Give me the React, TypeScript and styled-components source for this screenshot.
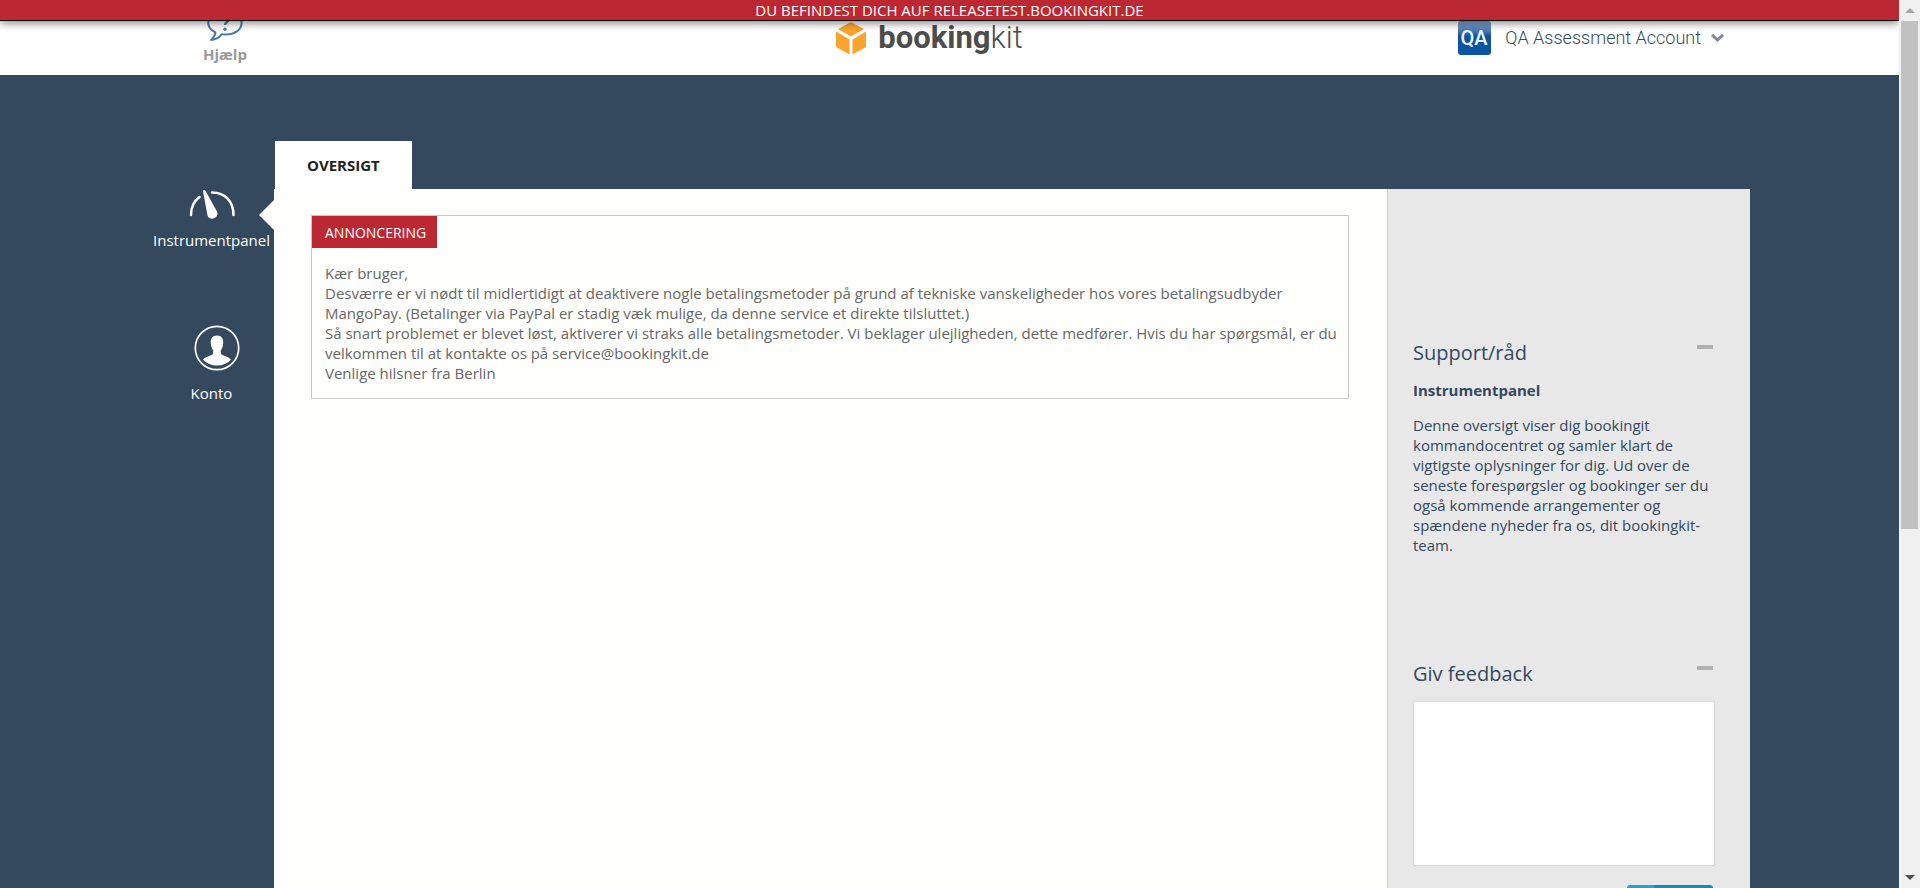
import React from 'react';
import styled, { createGlobalStyle } from 'styled-components';

const navy = '#34495e';
const red = '#bb2831';

const GlobalStyle = createGlobalStyle`
  *, *::before, *::after { box-sizing: border-box; }
  body {
    margin: 0;
    font-family: "Open Sans", "Noto Sans", sans-serif;
    font-size: 15px;
    line-height: 20px;
    color: ${navy};
    background: ${navy};
  }
  a { color: inherit; text-decoration: none; }
  h1, h2, h3, p { margin: 0; }
`;

const Shell = styled.div`
  display: grid;
  grid-template-columns: minmax(0, 1fr) 21px;
  height: 100vh;
`;

const Page = styled.div`
  position: relative;
  display: flex;
  flex-direction: column;
  overflow-y: auto;
  scrollbar-width: none;
`;

const Notice = styled.div`
  position: absolute;
  inset: 0 0 auto 0;
  z-index: 2;
  height: 21px;
  border-bottom: 1px solid #000;
  background: ${red};
  color: #fff;
  text-align: center;
  box-shadow: 0 2px 8px rgba(0, 0, 0, 0.5);
`;

const Header = styled.header`
  flex: none;
  height: 75px;
  background: #fff;
`;

const Container = styled.div`
  width: 100%;
  max-width: 1601px;
  margin: 0 auto;
`;

const HeaderRow = styled(Container)`
  display: grid;
  grid-template-columns: 1fr auto 1fr;
  height: 75px;
  padding-right: 26px;
`;

const HelpLink = styled.a`
  display: flex;
  flex-direction: column;
  align-items: center;
  justify-self: start;
  gap: 3px;
  width: 152px;
  padding-top: 7px;
  color: #999;
  font-weight: 700;
`;

const Brand = styled.a`
  display: flex;
  align-items: center;
  gap: 12px;
  height: 75px;
  margin-right: 14px;
  color: #4d4d4d;
  font: 700 31px/36px Roboto, sans-serif;
`;

const BrandThin = styled.span`
  font-weight: 300;
`;

const AccountButton = styled.button`
  display: flex;
  align-items: center;
  justify-self: end;
  height: 75px;
  padding: 0;
  border: 0;
  background: none;
  color: ${navy};
  font: 300 18px/24px Roboto, sans-serif;
`;

const AccountName = styled.span`
  margin: 0 10px 0 14px;
`;

const Workspace = styled(Container)`
  flex: 1 0 auto;
  display: grid;
  grid-template-columns: 125px minmax(0, 1fr);
  padding-top: 66px;
`;

const SideNav = styled.nav`
  display: flex;
  flex-direction: column;
  gap: 75px;
  padding-top: 48px;
`;

const NavLink = styled.a`
  position: relative;
  display: flex;
  flex-direction: column;
  align-items: center;
  gap: 12px;
  color: #fff;

  &[aria-current='page'] {
    gap: 7px;
  }

  &[aria-current='page']::after {
    content: '';
    position: absolute;
    top: 11px;
    right: 0;
    border: 15px solid transparent;
    border-right-color: #fefefc;
    border-left-width: 0;
  }
`;

const Main = styled.main`
  display: flex;
  flex-direction: column;
`;

const Tab = styled.a`
  align-self: flex-start;
  margin-left: 1px;
  padding: 14px 32px;
  background: #fff;
  color: #222;
  font-weight: 700;
`;

const Panel = styled.div`
  flex: 1;
  display: grid;
  grid-template-columns: minmax(0, 1fr) 363px;
  background: #fefefc;
`;

const Content = styled.section`
  padding: 26px 38px 26px 37px;
`;

const Announcement = styled.article`
  padding-bottom: 15px;
  border: 1px solid #c8c8c8;
  color: #666;
`;

const AnnouncementTitle = styled.h2`
  width: max-content;
  padding: 7px 11px 5px 13px;
  background: ${red};
  color: #fff;
  font-size: 14px;
  font-weight: 400;
  line-height: 20px;
`;

const AnnouncementText = styled.div`
  padding: 15px 10px 0 13px;
`;

const Sidebar = styled.aside`
  display: flex;
  flex-direction: column;
  gap: 105px;
  padding: 150px 35px 40px 25px;
  border-left: 1px solid #d2d2d2;
  background: #e8e8e8;
`;

const Widget = styled.section`
  display: flex;
  flex-direction: column;
`;

const WidgetHead = styled.div`
  display: flex;
  justify-content: space-between;
  align-items: flex-start;
  padding-right: 2px;
`;

const WidgetTitle = styled.h2`
  font-size: 20px;
  font-weight: 400;
  line-height: 28px;
`;

const Collapse = styled.button`
  width: 16px;
  height: 16px;
  padding: 0;
  border: 0;
  background: linear-gradient(#b0b0b0, #b0b0b0) 0 6px / 16px 4px no-repeat;
`;

const Topic = styled.h3`
  margin: 13px 0 15px;
  font-size: 15px;
  font-weight: 700;
  line-height: 20px;
`;

const Feedback = styled.textarea`
  height: 165px;
  margin: 13px 0 19px;
  border: 1px solid #d5d5d5;
  border-radius: 2px;
  background: #fff;
  font: inherit;
  resize: none;
`;

const SendButton = styled.button`
  align-self: flex-end;
  width: 86px;
  height: 40px;
  margin-right: 2px;
  padding: 0 0 0 26px;
  border: 0;
  border-radius: 3px;
  background: linear-gradient(90deg, #2ba0ca 27px, #178ab0 27px);
  color: #fff;
  font: inherit;
`;

const ScrollTrack = styled.div`
  display: flex;
  flex-direction: column;
  align-items: center;
  background: #f0f0f0;
`;

const ScrollArrow = styled.span<{ $down?: boolean }>`
  display: flex;
  justify-content: center;
  align-items: center;
  flex: none;
  height: 21px;

  &::after {
    content: '';
    border: 5px solid transparent;
    ${(p) =>
      p.$down
        ? 'border-top-color: #505050; border-bottom-width: 0;'
        : 'border-bottom-color: #a3a3a3; border-top-width: 0;'}
  }
`;

const ScrollRail = styled.div`
  flex: 1;
  width: 17px;
`;

const ScrollThumb = styled.div`
  height: 60%;
  background: #c1c1c1;
`;

const HelpIcon = () => (
  <svg width="36" height="34" viewBox="0 0 36 34" fill="none" stroke="#4f7ba8" strokeWidth="2" aria-hidden="true">
    <path d="M8.5 25.5C3.5 23 1.2 20 1.2 16C1.2 9 8 4 18 4s16.600 5 16.600 12-7 11.500-16 11.500c-1.500 0-2.500-.1-3.800-.4C12.500 30.500 8.500 32.500 4 33c2.500-2 4-4.500 4.500-7.500Z" strokeLinejoin="round" />
    <path d="M14 12c0-5 8-5 8 0 0 3-4 3-4 6" strokeWidth="2.500" />
    <circle cx="18" cy="22.200" r="1.700" fill="#4f7ba8" stroke="none" />
  </svg>
);

const CubeIcon = () => (
  <svg width="30" height="34" viewBox="0 0 30 34" fill="#f9a42c" aria-hidden="true">
    <path d="M15 1 28 8 15 15.500 2 8Z" />
    <path d="M0 10.500 13.500 18.500V33.500L0 26Z" />
    <path d="M30 10.500 16.500 18.500V33.500L30 26Z" />
  </svg>
);

const AccountLogo = () => (
  <svg width="33" height="34" viewBox="0 0 33 34" aria-hidden="true">
    <defs>
      <linearGradient id="badge" x1="0" y1="0" x2="0" y2="1">
        <stop offset="0" stopColor="#8aa9d0" />
        <stop offset="0.300" stopColor="#4577b3" />
        <stop offset="0.450" stopColor="#0f529d" />
        <stop offset="1" stopColor="#0b55a2" />
      </linearGradient>
    </defs>
    <rect width="33" height="34" rx="3" fill="url(#badge)" />
    <text x="16" y="24" textAnchor="middle" fill="#eaf6ff" fontFamily="Roboto, sans-serif" fontSize="20" fontWeight="500">QA</text>
  </svg>
);

const Chevron = () => (
  <svg width="13" height="10" viewBox="0 0 13 10" fill="none" stroke="#80899a" strokeWidth="3" aria-hidden="true">
    <path d="M1 1.800 6.500 7 12 1.800" />
  </svg>
);

const GaugeIcon = () => (
  <svg width="46" height="34" viewBox="0 0 46 34" fill="none" stroke="#fff" strokeWidth="2.500" strokeLinecap="round" aria-hidden="true">
    <path d="M2 26C2 18.500 5 12 10.500 8M23 3.500C36 3.500 44.500 12.500 44.500 26" />
    <path d="M14 2c.3-1.400 2-1.400 2.600 0L28 22.500c2.600 7-7.500 10-9.500 4Z" fill="#fff" stroke="none" />
  </svg>
);

const PersonIcon = () => (
  <svg width="56" height="46" viewBox="-10 0 56 46" aria-hidden="true">
    <circle cx="23" cy="23" r="21.700" fill="none" stroke="#fff" strokeWidth="1.700" />
    <path d="M23 10.500c4.600 0 6.500 3 6.200 7.500-.2 3.500-1 5.500-2.400 7.300v3.200c1 2.500 7.500 2.500 10.200 6.200C33.500 38.500 28.500 40.500 23 40.500S12.500 38.500 9 34.700c2.700-3.700 9.200-3.700 10.200-6.200v-3.200c-1.400-1.800-2.200-3.800-2.400-7.300-.3-4.500 1.600-7.500 6.200-7.500Z" fill="#fff" />
  </svg>
);

export default function App() {
  return (
    <>
      <GlobalStyle />
      <Shell>
        <Page>
          <Notice>DU BEFINDEST DICH AUF RELEASETEST.BOOKINGKIT.DE</Notice>
          <Header>
            <HeaderRow>
              <HelpLink href="#help">
                <HelpIcon />
                Hjælp
              </HelpLink>
              <Brand href="#home">
                <CubeIcon />
                <span>booking<BrandThin>kit</BrandThin></span>
              </Brand>
              <AccountButton type="button">
                <AccountLogo />
                <AccountName>QA Assessment Account</AccountName>
                <Chevron />
              </AccountButton>
            </HeaderRow>
          </Header>
          <Workspace>
            <SideNav>
              <NavLink href="#dashboard" aria-current="page">
                <GaugeIcon />
                Instrumentpanel
              </NavLink>
              <NavLink href="#account">
                <PersonIcon />
                Konto
              </NavLink>
            </SideNav>
            <Main>
              <Tab href="#overview">OVERSIGT</Tab>
              <Panel>
                <Content>
                  <Announcement>
                    <AnnouncementTitle>ANNONCERING</AnnouncementTitle>
                    <AnnouncementText>
                      <p>Kær bruger,</p>
                      <p>
                        Desværre er vi nødt til midlertidigt at deaktivere nogle betalingsmetoder på grund af tekniske
                        vanskeligheder hos vores betalingsudbyder MangoPay. (Betalinger via PayPal er stadig væk mulige,
                        da denne service et direkte tilsluttet.)
                      </p>
                      <p>
                        Så snart problemet er blevet løst, aktiverer vi straks alle betalingsmetoder. Vi beklager
                        ulejligheden, dette medfører. Hvis du har spørgsmål, er du velkommen til at kontakte os på
                        service@bookingkit.de
                      </p>
                      <p>Venlige hilsner fra Berlin</p>
                    </AnnouncementText>
                  </Announcement>
                </Content>
                <Sidebar>
                  <Widget>
                    <WidgetHead>
                      <WidgetTitle>Support/råd</WidgetTitle>
                      <Collapse type="button" aria-label="Skjul support" />
                    </WidgetHead>
                    <Topic>Instrumentpanel</Topic>
                    <p>
                      Denne oversigt viser dig bookingit kommandocentret og samler klart de vigtigste oplysninger for
                      dig. Ud over de seneste forespørgsler og bookinger ser du også kommende arrangementer og spændene
                      nyheder fra os, dit bookingkit-team.
                    </p>
                  </Widget>
                  <Widget>
                    <WidgetHead>
                      <WidgetTitle as="label" htmlFor="feedback">Giv feedback</WidgetTitle>
                      <Collapse type="button" aria-label="Skjul feedback" />
                    </WidgetHead>
                    <Feedback id="feedback" />
                    <SendButton type="button">Send</SendButton>
                  </Widget>
                </Sidebar>
              </Panel>
            </Main>
          </Workspace>
        </Page>
        <ScrollTrack aria-hidden="true">
          <ScrollArrow />
          <ScrollRail>
            <ScrollThumb />
          </ScrollRail>
          <ScrollArrow $down />
        </ScrollTrack>
      </Shell>
    </>
  );
}
